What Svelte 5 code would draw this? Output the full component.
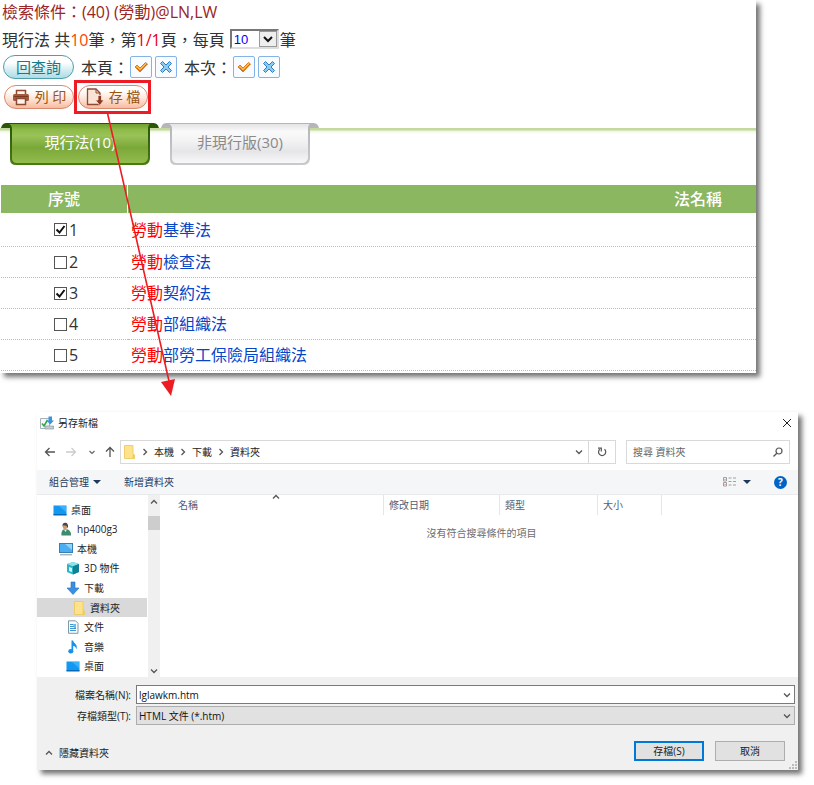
<script>
    let pageSize = $state('10');
    let activeTab = $state(0);
    let fileName = $state('lglawkm.htm');
    let fileType = $state('htm');

    const tabs = [
        { label: '現行法', count: 10 },
        { label: '非現行版', count: 30 }
    ];

    let laws = $state([
        { id: 1, name: '基準法', checked: true },
        { id: 2, name: '檢查法', checked: false },
        { id: 3, name: '契約法', checked: true },
        { id: 4, name: '部組織法', checked: false },
        { id: 5, name: '部勞工保險局組織法', checked: false }
    ]);

    const crumbs = ['本機', '下載', '資料夾'];

    const folders = [
        { name: '桌面', icon: 'desktop', level: 0 },
        { name: 'hp400g3', icon: 'user', level: 1 },
        { name: '本機', icon: 'pc', level: 1 },
        { name: '3D 物件', icon: 'cube', level: 2 },
        { name: '下載', icon: 'download', level: 2 },
        { name: '資料夾', icon: 'folder', level: 3, selected: true },
        { name: '文件', icon: 'doc', level: 2 },
        { name: '音樂', icon: 'music', level: 2 },
        { name: '桌面', icon: 'desktop', level: 2 }
    ];

    function setAll(value) {
        laws.forEach((law) => (law.checked = value));
    }
</script>

{#snippet icon(name)}
    <svg class="icon" viewBox="0 0 14 14" width="14" height="14" aria-hidden="true">
        {#if name === 'desktop'}
            <rect x="0.5" y="2.5" width="13" height="9.5" fill="#1398f2" />
            <path d="M6 3h7v6z" fill="#38b2fb" />
            <rect x="0.5" y="11" width="13" height="1.5" fill="#0869b5" />
        {:else if name === 'user'}
            <path d="M2.500 13.500C2 9.500 3.500 7 6.500 7s6 2.500 5.500 6.500z" fill="#3d8c6c" />
            <path d="M5 7.500l1.500 2.500L8 7.500z" fill="#e9f2ee" />
            <circle cx="6" cy="4.800" r="2.400" fill="#c69a7b" />
            <path d="M3.500 4.500C3 1 5.500 .3 7 .8S9.800 3.500 8.600 6.500L7.600 3.800 4.500 3.300z" fill="#4b4540" />
        {:else if name === 'pc'}
            <rect x="0.5" y="1.500" width="13" height="9" fill="#4aaef0" stroke="#3b7fb0" />
            <path d="M6 2h7v6z" fill="#8fd4fb" />
            <path d="M1 12.800h12" stroke="#8296a5" />
        {:else if name === 'cube'}
            <path d="M1 3l6-2 6 2v8l-6 2.500L1 11z" fill="#27b5c8" />
            <path d="M1 3l6-2 6 2-6 2.300z" fill="#8ee3ea" />
            <path d="M7 5.300L13 3v8l-6 2.500z" fill="#117f98" />
            <path d="M3 6l3 1v4l-3-1z" fill="#d5f4f6" />
        {:else if name === 'download'}
            <path d="M5 1h4v6h4l-6 6.500L1 7h4z" fill="#3a8fe0" stroke="#2471c0" stroke-width=".6" />
        {:else if name === 'folder'}
            <path d="M2.500 .5h8.500v8.500l1.500 1v3.500h-10z" fill="#ffe38c" stroke="#ecc65a" stroke-width=".8" />
            <path d="M10.500 9.500h2v4h-2z" fill="#f3cb5a" />
        {:else if name === 'doc'}
            <path d="M2.500 .8h7l2.500 2.500v10h-9.500z" fill="#f7fafc" stroke="#8298a8" />
            <path d="M4 4.500h3M4 6.500h6M4 8.500h6M4 10.500h6" stroke="#3c97cf" />
            <path d="M7 4h3v4H8z" fill="#6eb8e2" />
        {:else if name === 'music'}
            <path d="M5.500 .5h1.600C7.500 3.500 12.500 4.500 10.300 9.500 10.300 7.500 9 6.200 7.200 6v5.500H5.500z" fill="#1592ec" />
            <ellipse cx="4.800" cy="11.300" rx="2.500" ry="2.200" fill="#1592ec" />
        {/if}
    </svg>
{/snippet}

{#snippet chevron(dir)}
    <svg class="chevron {dir}" viewBox="0 0 8 8" width="8" height="8" aria-hidden="true">
        <path d="M1 2.500l3 3 3-3" fill="none" stroke="currentColor" stroke-width="1.300" />
    </svg>
{/snippet}

{#snippet tick()}
    <svg viewBox="0 0 16 16" width="16" height="16" aria-hidden="true">
        <path d="M2 8l2-2 3 3 5.500-5.500L14.500 5 7 13z" fill="#ffb347" stroke="#e07b1c" />
        <path d="M3.500 8.500L7 12l7-7" fill="none" stroke="#b8641c" stroke-width=".8" />
    </svg>
{/snippet}

{#snippet cross()}
    <svg viewBox="0 0 16 16" width="16" height="16" aria-hidden="true">
        <path d="M4.500 2.500L8 6l3.500-3.500 2 2L10 8l3.500 3.500-2 2L8 10l-3.500 3.500-2-2L6 8 2.500 4.500z" fill="#8ec9f2" stroke="#2b7fc0" />
    </svg>
{/snippet}

<main>
    <section class="results">
        <h1>檢索條件：(40) (勞動)@LN,LW</h1>

        <div class="summary">
            <span>現行法 共<b class="total">10</b>筆，第<b class="page">1/1</b>頁，<label for="page-size">每頁</label></span>
            <span class="page-size">
                <select id="page-size" bind:value={pageSize}>
                    <option>10</option>
                    <option>20</option>
                    <option>50</option>
                </select>
                <span class="drop">
                    <svg viewBox="0 0 10 8" width="10" height="8" aria-hidden="true">
                        <path d="M1 2l4 4 4-4" fill="none" stroke="#111" stroke-width="2" />
                    </svg>
                </span>
            </span>
            <span>筆</span>
        </div>

        <div class="tools">
            <button class="pill query">回查詢</button>
            <span class="scope">本頁：</span>
            <button class="mark" aria-label="全選本頁" onclick={() => setAll(true)}>{@render tick()}</button>
            <button class="mark" aria-label="取消本頁" onclick={() => setAll(false)}>{@render cross()}</button>
            <span class="scope">本次：</span>
            <button class="mark" aria-label="全選本次" onclick={() => setAll(true)}>{@render tick()}</button>
            <button class="mark" aria-label="取消本次" onclick={() => setAll(false)}>{@render cross()}</button>
        </div>

        <div class="actions">
            <button class="pill action">
                <svg viewBox="0 0 18 18" width="18" height="18" aria-hidden="true">
                    <path d="M4.500 6V2.500h9V6" fill="#fff3ec" stroke="#8d4a31" stroke-width="1.500" />
                    <rect x="1" y="6" width="16" height="7" rx="1.500" fill="#a55a3d" />
                    <path d="M2 8.500h14" stroke="#7b3a22" />
                    <path d="M4.500 10.500h9v6h-9z" fill="#fff3ec" stroke="#8d4a31" stroke-width="1.500" />
                </svg>
                列 印
            </button>
            <div class="highlight">
                <button class="pill action">
                    <svg viewBox="0 0 18 18" width="18" height="18" aria-hidden="true">
                        <path d="M1.500 1h8.500l4 4v11.500h-12.500z" fill="#fbe3d6" stroke="#8d4a31" stroke-width="1.300" />
                        <path d="M10 1v4h4" fill="none" stroke="#8d4a31" />
                        <path d="M12 7.500h3.500V12H18l-4.200 5.500L9.500 12H12z" fill="#8a3c22" stroke="#fbe3d6" stroke-width=".8" />
                    </svg>
                    存 檔
                </button>
                <svg class="pointer" viewBox="0 0 72 290" width="72" height="290" aria-hidden="true">
                    <path d="M2 0L64 270" stroke="#ed1c24" stroke-width="1.600" />
                    <path d="M56 271l14-3-4 17z" fill="#ed1c24" />
                </svg>
            </div>
        </div>

        <div class="tabs" role="tablist">
            {#each tabs as tab, i}
                <button
                    role="tab"
                    class="tab"
                    class:active={activeTab === i}
                    aria-selected={activeTab === i}
                    onclick={() => (activeTab = i)}
                >
                    <svg class="shape" viewBox="0 0 160 43" width="160" height="43" aria-hidden="true">
                        <defs>
                            <linearGradient id="fill-{i}" x1="0" y1="0" x2="0" y2="1">
                                {#if activeTab === i}
                                    <stop offset="0" stop-color="#6f9f2e" />
                                    <stop offset=".15" stop-color="#8ebb49" />
                                    <stop offset=".3" stop-color="#9ac258" />
                                    <stop offset=".6" stop-color="#7ba738" />
                                    <stop offset="1" stop-color="#92bd4e" />
                                {:else}
                                    <stop offset="0" stop-color="#e4e4e6" />
                                    <stop offset=".2" stop-color="#fafafb" />
                                    <stop offset=".4" stop-color="#f4f4f5" />
                                    <stop offset=".7" stop-color="#e6e6e8" />
                                    <stop offset="1" stop-color="#f8f8fa" />
                                {/if}
                            </linearGradient>
                            <linearGradient id="edge-{i}" x1="0" y1="0" x2="0" y2="1">
                                <stop offset="0" stop-color={activeTab === i ? '#285405' : '#b4b4b9'} />
                                <stop offset="1" stop-color={activeTab === i ? '#4a7c11' : '#c9c9ce'} />
                            </linearGradient>
                        </defs>
                        <path
                            d="M1 5C2 1 4 0 7 0H152C156 0 158 1 159 5H150V36Q149 42 143 42H16Q10 42 10 36V5z"
                            fill="url(#edge-{i})"
                        />
                        <path d="M9 1H150Q148 2 148 6V35Q147 40 142 40H17Q12 40 12 35V6Q12 2 9 1z" fill="url(#fill-{i})" />
                    </svg>
                    <span>{tab.label}({tab.count})</span>
                </button>
            {/each}
        </div>

        <table class="laws">
            <thead>
                <tr>
                    <th class="no">序號</th>
                    <th class="name">法名稱</th>
                </tr>
            </thead>
            <tbody>
                {#each laws as law}
                    <tr>
                        <td class="no">
                            <label><input type="checkbox" bind:checked={law.checked} />{law.id}</label>
                        </td>
                        <td><a href="#law-{law.id}"><em>勞動</em>{law.name}</a></td>
                    </tr>
                {/each}
            </tbody>
        </table>
    </section>

    <section class="dialog" role="dialog" aria-labelledby="dialog-title">
        <header>
            <svg viewBox="0 0 14 14" width="14" height="14" aria-hidden="true">
                <path d="M.5 2.500h9v10h-9z" fill="#f5f7f8" stroke="#a5b0b8" />
                <path d="M2 7.500l2 2.500 3.500-6" fill="none" stroke="#28a745" stroke-width="1.500" />
                <path d="M8.500 .5h3.500v4h2l-3.700 4-3.800-4h2z" fill="#3d94dd" />
                <path d="M5 10h8.500v3H5z" fill="#c4cdd3" stroke="#7f8b93" stroke-width=".6" />
            </svg>
            <h2 id="dialog-title">另存新檔</h2>
            <button class="plain" aria-label="關閉">
                <svg viewBox="0 0 10 10" width="10" height="10"><path d="M1 1l8 8M9 1l-8 8" stroke="#222" /></svg>
            </button>
        </header>

        <nav>
            <div class="history">
                <button class="plain" aria-label="上一頁">
                    <svg viewBox="0 0 12 12" width="12" height="12"><path d="M11 6H2M5.500 2L1.500 6l4 4" fill="none" stroke="#555" stroke-width="1.300" /></svg>
                </button>
                <button class="plain" aria-label="下一頁" disabled>
                    <svg viewBox="0 0 12 12" width="12" height="12"><path d="M1 6h9M6.500 2l4 4-4 4" fill="none" stroke="#ccc" stroke-width="1.300" /></svg>
                </button>
                <button class="plain recent" aria-label="最近的位置">
                    <svg viewBox="0 0 6 6" width="6" height="6"><path d="M.5 2L3 4.500 5.500 2" fill="none" stroke="#666" stroke-width="1.200" /></svg>
                </button>
                <button class="plain" aria-label="上一層">
                    <svg viewBox="0 0 12 12" width="12" height="12"><path d="M6 11V2M2 5.500l4-4 4 4" fill="none" stroke="#555" stroke-width="1.300" /></svg>
                </button>
            </div>
            <div class="address">
                {@render icon('folder')}
                {#each crumbs as crumb}
                    {@render chevron('right')}
                    <a href="#{crumb}">{crumb}</a>
                {/each}
                <button class="plain expand" aria-label="展開">{@render chevron('down')}</button>
                <button class="plain reload" aria-label="重新整理">
                    <svg viewBox="0 0 10 10" width="10" height="10">
                        <path d="M7.500 2.200A3.600 3.600 0 1 1 2.800 2.200" fill="none" stroke="#555" stroke-width="1.200" />
                        <path d="M1 1.200h3.300v3.200" fill="none" stroke="#555" stroke-width="1.200" />
                    </svg>
                </button>
            </div>
            <div class="search">
                <input type="search" placeholder="搜尋 資料夾" aria-label="搜尋 資料夾" />
                <svg viewBox="0 0 10 10" width="10" height="10" aria-hidden="true">
                    <circle cx="6" cy="4" r="3" fill="none" stroke="#555" stroke-width="1.200" />
                    <path d="M3.800 6.200L.5 9.500" stroke="#555" stroke-width="1.300" />
                </svg>
            </div>
        </nav>

        <div class="toolbar">
            <button class="plain">組合管理 <i class="caret"></i></button>
            <button class="plain">新增資料夾</button>
            <button class="plain view" aria-label="檢視">
                <svg viewBox="0 0 14 10" width="14" height="10">
                    <path d="M.5 .5h3v3.500h-3zM.5 5.500h3v3.500h-3z" fill="#fff" stroke="#a0a0a0" />
                    <path d="M1.500 2.300h1" stroke="#3c78d8" />
                    <path d="M1.500 7.300h1" stroke="#d03c3c" />
                    <path d="M5.500 1h3M10 1h3M5.500 4.500h3M10 4.500h3M5.500 8h3M10 8h3" stroke="#a0a0a0" />
                </svg>
                <i class="caret"></i>
            </button>
            <button class="help" aria-label="說明">?</button>
        </div>

        <div class="browser">
            <ul class="tree">
                {#each folders as folder}
                    <li class="level-{folder.level}" class:selected={folder.selected}>
                        {@render icon(folder.icon)}
                        {folder.name}
                    </li>
                {/each}
            </ul>
            <div class="scrollbar">
                {@render chevron('up')}
                <div class="thumb"></div>
                {@render chevron('down')}
            </div>
            <table class="files">
                <thead>
                    <tr>
                        <th class="c-name">名稱 <span class="sort">{@render chevron('up')}</span></th>
                        <th class="c-date">修改日期</th>
                        <th class="c-type">類型</th>
                        <th class="c-size">大小</th>
                        <th></th>
                    </tr>
                </thead>
                <tbody>
                    <tr><td colspan="5">沒有符合搜尋條件的項目</td></tr>
                </tbody>
            </table>
        </div>

        <footer>
            <div class="field">
                <label for="file-name">檔案名稱(N):</label>
                <div class="box">
                    <input id="file-name" type="text" bind:value={fileName} />
                    {@render chevron('down')}
                </div>
            </div>
            <div class="field">
                <label for="file-type">存檔類型(T):</label>
                <div class="box type">
                    <select id="file-type" bind:value={fileType}>
                        <option value="htm">HTML 文件 (*.htm)</option>
                    </select>
                    {@render chevron('down')}
                </div>
            </div>
            <div class="buttons">
                <button class="plain hide">{@render chevron('up')} 隱藏資料夾</button>
                <button class="push primary">存檔(S)</button>
                <button class="push">取消</button>
            </div>
            <svg class="grip" viewBox="0 0 8 8" width="8" height="8" aria-hidden="true">
                <path d="M6 0h2v2H6zM3 3h2v2H3zM6 3h2v2H6zM0 6h2v2H0zM3 6h2v2H3zM6 6h2v2H6z" fill="#bbb" />
            </svg>
        </footer>
    </section>
</main>

<style>
    :global(body) {
        margin: 0;
        background: #fff;
    }

    main {
        font-family: "Open Sans", "Noto Sans CJK TC", sans-serif;
        font-size: 16px;
        color: #333;
        padding: 0 16px 14px 0;
    }

    button, input, select {
        box-sizing: border-box;
        margin: 0;
        font-family: inherit;
    }

    button {
        cursor: pointer;
    }

    svg {
        display: block;
        flex: none;
    }

    .results {
        margin-right: 58px;
        margin-right: 42px;
        padding-bottom: 2px;
        background: #fff;
        box-shadow: 4px 4px 5px rgba(0, 0, 0, 0.55);
    }

    h1 {
        margin: 0;
        padding-left: 2px;
        font-size: 16px;
        font-weight: 400;
        line-height: 25px;
        color: #9c2424;
    }

    .summary {
        display: flex;
        align-items: center;
        height: 28px;
        padding-left: 2px;
    }

    .summary b {
        font-weight: 400;
    }

    .total {
        color: #ff4500;
    }

    .page {
        color: #e60012;
    }

    .page-size {
        position: relative;
        margin: 0 1px 0 5px;
    }

    .page-size select {
        display: block;
        width: 49px;
        height: 20px;
        padding: 0 2px;
        border: 2px solid #777;
        border-right-color: #ddd;
        border-bottom-color: #ddd;
        border-radius: 0;
        background: #fff;
        color: #00f;
        font-family: "Liberation Sans", sans-serif;
        font-size: 13px;
        appearance: none;
    }

    .drop {
        position: absolute;
        top: 2px;
        right: 2px;
        display: grid;
        place-items: center;
        box-sizing: border-box;
        width: 18px;
        height: 16px;
        border: 1px solid #999;
        background: #eee;
        pointer-events: none;
    }

    .tools {
        display: flex;
        align-items: center;
        height: 27px;
        padding-left: 3px;
        gap: 3px;
    }

    .scope {
        width: 46px;
        margin-left: 4px;
        white-space: nowrap;
    }

    .pill {
        display: flex;
        align-items: center;
        justify-content: center;
        width: 70px;
        height: 24px;
        padding: 0;
        border: 1px solid #d78a6c;
        border-radius: 12px;
        font-size: 14px;
        line-height: 20px;
    }

    .query {
        width: 71px;
        border-color: #4d9fae;
        background: linear-gradient(#fff 30%, #d9eff3 60%, #aedbe4);
        color: #147a88;
        font-size: 15px;
    }

    .action {
        gap: 5px;
        background: linear-gradient(#fff 20%, #fde3d6 60%, #f7bb9f);
        color: #9c5510;
    }

    .mark {
        display: grid;
        place-items: center;
        width: 22px;
        height: 22px;
        padding: 0;
        border: 1px solid #86b3e6;
        border-radius: 2px;
        background: #f8fbff;
    }

    .actions {
        display: flex;
        align-items: center;
        padding-left: 4px;
    }

    .highlight {
        position: relative;
        padding: 2px 0 2px 1px;
        border: 3px solid #ed1c24;
    }

    /* arrow from the save button down to the dialog it opens */
    .pointer {
        position: absolute;
        top: 100%;
        left: 28px;
        z-index: 5;
        pointer-events: none;
    }

    .tabs {
        display: flex;
        height: 42px;
        margin-top: 9px;
        background: linear-gradient(#c4d99d, #c4d99d 2px, #eef5e0 3px, #fff 6px) 0 5px no-repeat;
    }

    .tab {
        position: relative;
        width: 160px;
        height: 42px;
        padding: 0 0 6px;
        border: 0;
        background: none;
        color: #8a8a8a;
        font-size: 15px;
    }

    .tab.active {
        color: #fff;
    }

    .shape {
        position: absolute;
        top: 0;
        left: 0;
    }

    .tab span {
        position: relative;
    }

    .laws {
        width: 100%;
        margin-top: 20px;
        padding-left: 1px;
        border-spacing: 0;
    }

    .laws th {
        height: 28px;
        padding: 0;
        background: #8ab75f;
        color: #fff;
        font-weight: 500;
        line-height: 28px;
    }

    .laws .no {
        width: 126px;
        text-align: center;
    }

    .laws th.no {
        border-right: 1px solid #fff;
    }

    .laws th.name {
        padding-right: 34px;
        text-align: right;
    }

    .laws td {
        height: 30px;
        padding: 0 0 0 3px;
        border-bottom: 1px dotted #bbb;
        line-height: 30px;
    }

    .laws td.no {
        padding: 0;
    }

    .laws tbody tr:first-child td {
        height: 33px;
    }

    .laws label {
        display: flex;
        align-items: center;
        justify-content: center;
        gap: 2px;
        padding-left: 3px;
    }

    .laws input {
        width: 13px;
        height: 13px;
        border: 1px solid #555;
        background: #fff;
        appearance: none;
    }

    .laws input:checked {
        background: #fff url("data:image/svg+xml,%3Csvg xmlns='http://www.w3.org/2000/svg' viewBox='0 0 11 11'%3E%3Cpath d='M1.500 5.500l3 3L9.500 2' fill='none' stroke='%23111' stroke-width='2'/%3E%3C/svg%3E");
    }

    .laws a {
        color: #0645c8;
        text-decoration: none;
    }

    .laws em {
        color: #f00;
        font-style: normal;
    }

    .dialog {
        margin: 39px 0 0 37px;
        background: #fff;
        box-shadow: 4px 4px 5px rgba(0, 0, 0, 0.55);
        color: #222;
        font-size: 10px;
        line-height: 14px;
    }

    .dialog a {
        color: inherit;
        text-decoration: none;
    }

    .plain {
        display: flex;
        align-items: center;
        gap: 4px;
        padding: 0;
        border: 0;
        background: none;
        color: inherit;
        font-size: 10px;
        line-height: 14px;
    }

    .chevron {
        color: #555;
    }

    .chevron.up {
        transform: rotate(180deg);
    }

    .chevron.right {
        transform: rotate(-90deg);
    }

    header {
        display: flex;
        align-items: center;
        gap: 4px;
        height: 22px;
        padding: 0 6px 0 3px;
    }

    h2 {
        flex: 1;
        margin: 0;
        font-size: 10px;
        font-weight: 400;
    }

    nav {
        display: flex;
        align-items: center;
        height: 36px;
        padding: 0 8px 0 7px;
    }

    .history {
        display: flex;
        align-items: center;
        justify-content: space-between;
        width: 72px;
        margin-right: 4px;
    }

    .recent {
        padding-left: 3px;
    }

    .address, .search {
        display: flex;
        align-items: center;
        box-sizing: border-box;
        height: 24px;
        border: 1px solid #d9d9d9;
    }

    .address {
        flex: 1;
        gap: 5px;
        padding-left: 1px;
    }

    .expand {
        margin-left: auto;
    }

    .reload {
        justify-content: center;
        width: 27px;
        height: 22px;
        border-left: 1px solid #d9d9d9;
    }

    .search {
        width: 164px;
        margin-left: 10px;
        padding: 0 6px;
    }

    .search input {
        flex: 1;
        min-width: 0;
        padding: 0;
        border: 0;
        outline: 0;
        background: none;
        font-size: 10px;
        appearance: none;
    }

    .search input::placeholder {
        color: #666;
    }

    .toolbar {
        display: flex;
        align-items: center;
        gap: 23px;
        height: 24px;
        padding: 0 11px 0 12px;
        border-bottom: 1px solid #e8eaec;
        background: #f5f6f8;
        color: #1e395b;
    }

    .caret {
        border: 4px solid transparent;
        border-top-color: #1e395b;
        border-bottom: 0;
    }

    .view {
        gap: 6px;
        margin-left: auto;
    }

    .help {
        width: 13px;
        height: 13px;
        padding: 0;
        border: 0;
        border-radius: 50%;
        background: #0063c6;
        color: #fff;
        font-size: 10px;
        font-weight: 700;
        line-height: 13px;
    }

    .browser {
        display: flex;
        height: 182px;
    }

    .tree {
        display: grid;
        grid-auto-rows: 1fr;
        flex: none;
        width: 110px;
        margin: 0;
        padding: 5px 0 1px;
        list-style: none;
    }

    .tree li {
        display: flex;
        align-items: center;
        gap: 4px;
        padding-left: 16px;
    }

    .tree .level-1 {
        padding-left: 22px;
    }

    .tree .level-2 {
        padding-left: 29px;
    }

    .tree .level-3 {
        padding-left: 35px;
    }

    .tree .selected {
        background: #d9d9d9;
    }

    .scrollbar {
        display: flex;
        flex-direction: column;
        align-items: center;
        flex: none;
        width: 12px;
        margin-left: 1px;
        padding: 3px 0 2px;
        background: #f0f0f0;
    }

    .thumb {
        width: 12px;
        height: 14px;
        margin: 10px 0 auto;
        background: #cdcdcd;
    }

    .files {
        flex: 1;
        align-self: flex-start;
        border-collapse: collapse;
        table-layout: fixed;
    }

    .files th {
        position: relative;
        height: 20px;
        padding: 0 0 0 5px;
        border-right: 1px solid #e5e5e5;
        color: #4c607a;
        font-weight: 400;
        line-height: 14px;
        text-align: left;
    }

    .files th:last-child {
        border-right: 0;
    }

    .files .c-name {
        width: 205px;
        padding-left: 18px;
    }

    .c-date {
        width: 110px;
    }

    .c-type {
        width: 92px;
    }

    .c-size {
        width: 58px;
    }

    .sort {
        position: absolute;
        top: -2px;
        left: 50%;
    }

    .files td {
        padding: 11px 0 0 5px;
        color: #6d6d6d;
        text-align: center;
    }

    footer {
        position: relative;
        display: flex;
        flex-direction: column;
        gap: 2px;
        padding: 8px 3px 9px 8px;
        background: #f0f0f0;
    }

    .field {
        display: flex;
        align-items: center;
    }

    .field label {
        width: 86px;
        margin-right: 5px;
        text-align: right;
    }

    .box {
        display: flex;
        flex: 1;
        align-items: center;
        box-sizing: border-box;
        height: 19px;
        padding-right: 3px;
        border: 1px solid #7a7a7a;
        background: #fff;
    }

    .box.type {
        border-color: #adadad;
        background: #e1e1e1;
    }

    .box input, .box select {
        flex: 1;
        min-width: 0;
        height: 17px;
        padding: 0 2px;
        border: 0;
        outline: 0;
        background: none;
        color: #111;
        font-size: 10px;
        appearance: none;
    }

    .buttons {
        display: flex;
        align-items: center;
        gap: 11px;
        margin-top: 14px;
        padding-right: 10px;
    }

    .hide {
        gap: 6px;
        margin-right: auto;
        padding-top: 4px;
    }

    .push {
        width: 70px;
        height: 20px;
        padding: 0;
        border: 1px solid #adadad;
        background: #e1e1e1;
        color: #222;
        font-size: 10px;
        line-height: 14px;
    }

    .push.primary {
        border: 2px solid #0078d7;
    }

    .grip {
        position: absolute;
        right: 1px;
        bottom: 1px;
    }
</style>
